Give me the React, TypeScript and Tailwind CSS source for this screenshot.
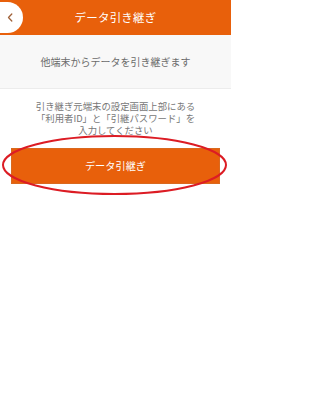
import React from 'react';

const font = { fontFamily: '"Noto Sans CJK JP", "Noto Sans", sans-serif' };

export default function App() {
  return (
    <div className="relative w-[231px] h-[410px] bg-white overflow-hidden" style={font}>
      {/* Header */}
      <div className="relative h-[35px] bg-[#e8600b] flex items-center justify-center">
        <button className="absolute left-0 top-[2px] w-[23px] h-[31px] bg-white rounded-r-full flex items-center justify-center pr-[4px]">
          <svg width="6" height="9" viewBox="0 0 6 9" fill="none">
            <path d="M4.8 1L1.5 4.5L4.8 8" stroke="#a0623a" strokeWidth="1.3" strokeLinecap="round" strokeLinejoin="round" />
          </svg>
        </button>
        <h1 className="text-white text-[11.5px] leading-none tracking-[0.2px] font-normal">データ引き継ぎ</h1>
      </div>

      {/* Subtitle band */}
      <div className="h-[54px] bg-[#f8f8f8] border-b border-[#ececec] flex items-center justify-center">
        <p className="text-[#6b6b6b] text-[10px] leading-none">他端末からデータを引き継ぎます</p>
      </div>

      {/* Instructions */}
      <div className="pt-[11px] flex flex-col items-center text-[#777] text-[9.4px] leading-[12px] text-center">
        <p>引き継ぎ元端末の設定画面上部にある</p>
        <p>「利用者ID」と「引継パスワード」を</p>
        <p>入力してください</p>
      </div>

      {/* Button */}
      <div className="px-[11px] mt-[12px]">
        <button className="w-full h-[36px] bg-[#e8600b] border border-[#d9691f] text-white text-[10.2px] flex items-center justify-center">
          データ引継ぎ
        </button>
      </div>

      {/* Red annotation ellipse */}
      <svg className="absolute left-0 top-0 pointer-events-none" width="231" height="410">
        <ellipse cx="114.5" cy="165" rx="111.5" ry="29" fill="none" stroke="#dc1c24" strokeWidth="2" />
      </svg>
    </div>
  );
}
